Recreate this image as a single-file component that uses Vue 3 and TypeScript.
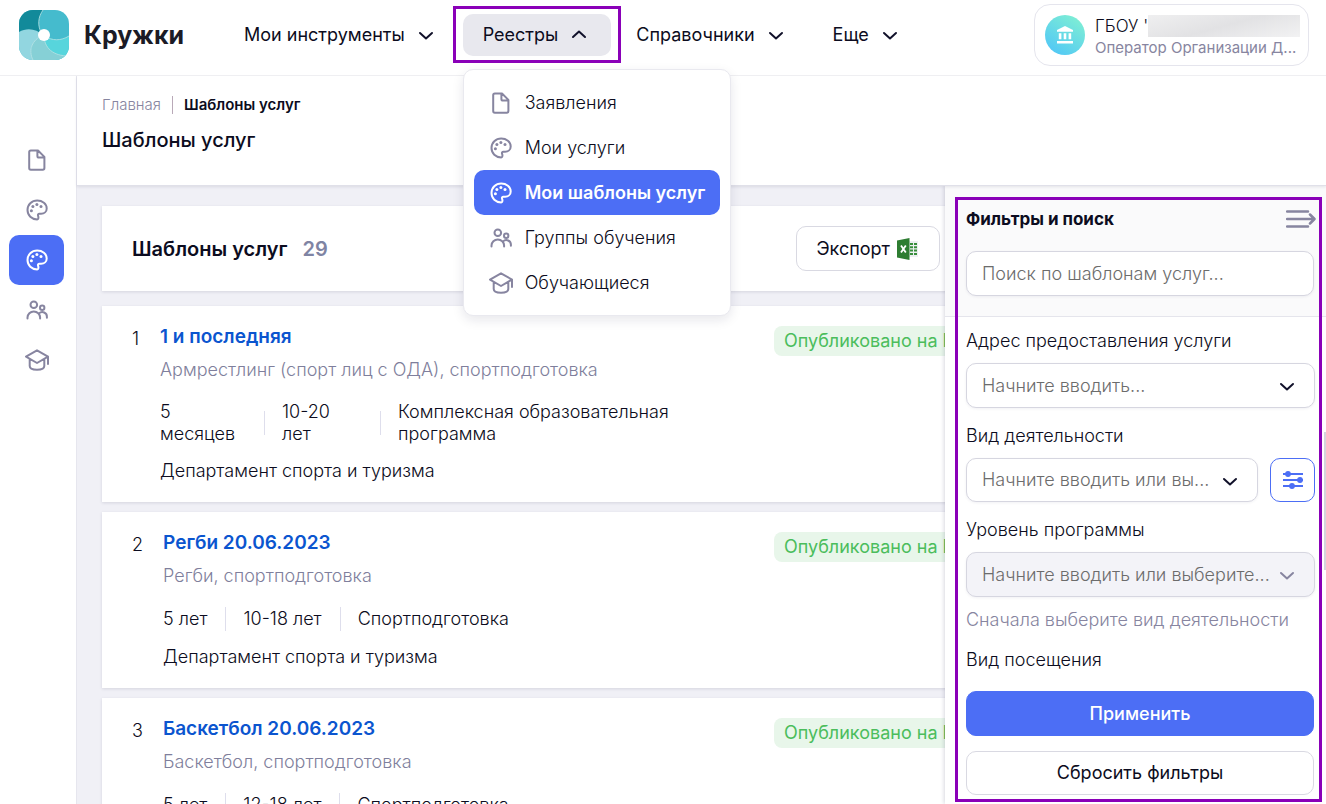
<script setup lang="ts">
import { ref } from 'vue'

type IconName = 'file' | 'palette' | 'group' | 'cap'

interface MenuItem {
  label: string
  icon: IconName
  active?: boolean
}

interface Service {
  id: number
  title: string
  activity: string
  facts: string[]
  department: string
  long?: boolean
}

const menu: MenuItem[] = [
  { label: 'Заявления', icon: 'file' },
  { label: 'Мои услуги', icon: 'palette' },
  { label: 'Мои шаблоны услуг', icon: 'palette', active: true },
  { label: 'Группы обучения', icon: 'group' },
  { label: 'Обучающиеся', icon: 'cap' },
]

const nav = ['Мои инструменты', 'Реестры', 'Справочники', 'Еще']
const opened = ref('Реестры')

const services: Service[] = [
  {
    id: 1,
    title: '1 и последняя',
    activity: 'Армрестлинг (спорт лиц с ОДА), спортподготовка',
    facts: ['5 месяцев', '10-20 лет', 'Комплексная образовательная программа'],
    department: 'Департамент спорта и туризма',
    long: true,
  },
  {
    id: 2,
    title: 'Регби 20.06.2023',
    activity: 'Регби, спортподготовка',
    facts: ['5 лет', '10-18 лет', 'Спортподготовка'],
    department: 'Департамент спорта и туризма',
  },
  {
    id: 3,
    title: 'Баскетбол 20.06.2023',
    activity: 'Баскетбол, спортподготовка',
    facts: ['5 лет', '12-18 лет', 'Спортподготовка'],
    department: 'Департамент спорта и туризма',
  },
]

function toggle(name: string) {
  opened.value = opened.value === name ? '' : name
}
</script>

<template>
  <div class="page">
    <svg class="sprite" aria-hidden="true">
      <symbol id="i-file" viewBox="0 0 24 24">
        <path d="M5.8 2.5h7.2l6.4 6.4v11.200a1.600 1.600 0 0 1-1.600 1.600H5.800a1.600 1.600 0 0 1-1.600-1.600V4.100a1.600 1.600 0 0 1 1.600-1.600z M12.400 2.800v5.100a1.600 1.600 0 0 0 1.600 1.600h5" />
      </symbol>
      <symbol id="i-palette" viewBox="0 0 24 24">
        <path d="M12.200 21.400C6.700 21.400 2.500 17.300 2.500 12S6.700 2.500 12.200 2.500c5.200 0 9.500 3.400 9.500 7.900 0 3.400-2.600 5.400-5.600 5.400h-1.700c-1.400 0-1.700 1-1.300 2.100.5 1.300.6 3.500-.9 3.500z" />
        <g class="dots">
          <circle cx="6.400" cy="12.700" r="1.500" />
          <circle cx="7.900" cy="8.500" r="1.500" />
          <circle cx="11.900" cy="6.500" r="1.500" />
          <circle cx="16" cy="8.400" r="1.500" />
        </g>
      </symbol>
      <symbol id="i-group" viewBox="0 0 24 24">
        <circle cx="8.800" cy="6.700" r="3.300" />
        <circle cx="17.200" cy="9.700" r="2.200" />
        <path d="M2.500 20.500v-.9a6.300 6.100 0 0 1 12.600 0v.9M14.100 15.400a4.600 4.600 0 0 1 7.800 3.500v.9" />
      </symbol>
      <symbol id="i-cap" viewBox="0 0 24 24">
        <path d="M12 2.300 1 8.600l11 6.400 11-6.400z M23 8.600v7.400 M4.700 11v7c0 2.600 3 3.700 7.300 3.700s7.300-1.100 7.300-3.700v-7" />
      </symbol>
    </svg>

    <header class="top">
      <a class="brand" href="#">
        <svg class="logo" viewBox="0 0 50 50" aria-hidden="true">
          <defs>
            <clipPath id="logo-clip"><rect width="50" height="50" rx="14" /></clipPath>
          </defs>
          <g clip-path="url(#logo-clip)">
            <rect width="50" height="50" fill="#45bbcd" />
            <path d="M24 0C19 7 18 16 23 24L0 24V0z" fill="#128a9a" />
            <path d="M50 26C42 31 33 31 26 26L26 50H50z" fill="#57d5dc" />
            <path d="M25 25C25 38 34 46 50 46V50H10L14 30z" fill="#86d0d6" />
            <path d="M0 22C8 17 18 19 24 25C13 30 9 40 14 50H0z" fill="#92d6e0" />
            <g fill="none" stroke="#b9e3e4" stroke-width="0.8">
              <path d="M24 0C19 7 18 16 23 24" />
              <path d="M50 26C42 31 33 31 26 26" />
              <path d="M25 25C25 38 34 46 50 46" />
              <path d="M24 25C13 30 9 40 14 50" />
            </g>
          </g>
          <circle cx="25" cy="25" r="6" fill="#fff" />
        </svg>
        <span>Кружки</span>
      </a>

      <nav class="nav">
        <div v-for="name in nav" :key="name" class="nav-cell">
          <button
            type="button"
            class="nav-btn"
            :class="{ open: opened === name }"
            :aria-expanded="opened === name"
            @click="toggle(name)"
          >
            <span>{{ name }}</span>
            <svg class="chev" viewBox="0 0 24 24" aria-hidden="true"><path d="M6 10l6 5.500L18 10" /></svg>
          </button>
          <div v-if="name === 'Реестры' && opened === name" class="menu">
            <a v-for="item in menu" :key="item.label" href="#" class="menu-item" :class="{ active: item.active }">
              <svg class="icon" aria-hidden="true"><use :href="'#i-' + item.icon" /></svg>
              <span>{{ item.label }}</span>
            </a>
          </div>
        </div>
      </nav>

      <button type="button" class="user">
        <span class="avatar">
          <svg viewBox="0 0 20 20" aria-hidden="true">
            <path d="M10 1 18 5v1.800H2V5z M3.800 8.200h2.600v6H3.800z M8.700 8.200h2.600v6H8.700z M13.600 8.200h2.600v6h-2.600z M2 16h16v2.400H2z" />
          </svg>
        </span>
        <span class="user-text">
          <span class="user-name">ГБОУ '<i class="mask"></i></span>
          <span class="user-role">Оператор Организации Д...</span>
        </span>
      </button>
    </header>

    <div class="body">
      <aside class="side">
        <a v-for="item in menu" :key="item.label" href="#" class="side-link" :class="{ active: item.active }" :aria-label="item.label">
          <svg class="icon" aria-hidden="true"><use :href="'#i-' + item.icon" /></svg>
        </a>
      </aside>

      <main class="main">
        <div class="page-head">
          <div class="crumbs">
            <a href="#">Главная</a>
            <span class="bar"></span>
            <b>Шаблоны услуг</b>
          </div>
          <h1>Шаблоны услуг</h1>
        </div>

        <div class="work">
          <section class="list">
            <div class="card list-head">
              <h2>Шаблоны услуг</h2>
              <span class="count">29</span>
              <button type="button" class="btn export">
                <span>Экспорт</span>
                <svg viewBox="0 0 22 22" aria-hidden="true">
                  <rect x="10" y="3" width="11" height="16" fill="#eceff1" />
                  <g fill="#388e3c">
                    <path d="M13 5h3v2h-3zM17 5h3v2h-3zM13 8.300h3v2h-3zM17 8.300h3v2h-3zM13 11.600h3v2h-3zM17 11.600h3v2h-3zM13 15h3v2h-3zM17 15h3v2h-3z" />
                  </g>
                  <path d="M12.500 22 0 19.500v-17L12.500 0z" fill="#2e7d32" />
                  <path d="M4 7.500 8.800 14.500M8.800 7.500 4 14.500" stroke="#fff" stroke-width="1.800" />
                </svg>
              </button>
            </div>

            <article v-for="s in services" :key="s.id" class="card service">
              <span class="num">{{ s.id }}</span>
              <div class="info">
                <a href="#" class="title">{{ s.title }}</a>
                <p class="activity">{{ s.activity }}</p>
                <ul class="facts" :class="{ long: s.long }">
                  <li v-for="fact in s.facts" :key="fact">{{ fact }}</li>
                </ul>
                <p class="dept">{{ s.department }}</p>
              </div>
              <div class="status"><span class="badge">Опубликовано на Mos.ru</span></div>
            </article>
          </section>

          <aside class="filters">
            <div class="filters-head">
              <div class="filters-title">
                <h3>Фильтры и поиск</h3>
                <button type="button" class="collapse" aria-label="Свернуть">
                  <svg viewBox="0 0 30 18" aria-hidden="true">
                    <path d="M1 1.500h21M1 9h27M1 16.500h21M24 4.500 28.500 9 24 13.500" />
                  </svg>
                </button>
              </div>
              <input class="field" type="text" placeholder="Поиск по шаблонам услуг..." aria-label="Поиск по шаблонам услуг" />
            </div>

            <div class="filters-body">
              <label for="address">Адрес предоставления услуги</label>
              <div class="select">
                <select id="address" class="field"><option>Начните вводить...</option></select>
                <svg class="chev" viewBox="0 0 24 24" aria-hidden="true"><path d="M6 10l6 5.500L18 10" /></svg>
              </div>

              <label for="activity">Вид деятельности</label>
              <div class="row">
                <div class="select">
                  <select id="activity" class="field"><option>Начните вводить или вы...</option></select>
                  <svg class="chev" viewBox="0 0 24 24" aria-hidden="true"><path d="M6 10l6 5.500L18 10" /></svg>
                </div>
                <button type="button" class="tune" aria-label="Настроить">
                  <svg viewBox="0 0 22 20" aria-hidden="true">
                    <path d="M1 4h20M1 10h20M1 16h20" />
                    <circle cx="6" cy="4" r="2.900" />
                    <circle cx="18" cy="10" r="2.900" />
                    <circle cx="10" cy="16" r="2.900" />
                  </svg>
                </button>
              </div>

              <label for="level">Уровень программы</label>
              <div class="select">
                <select id="level" class="field" disabled><option>Начните вводить или выберите...</option></select>
                <svg class="chev muted" viewBox="0 0 24 24" aria-hidden="true"><path d="M6 10l6 5.500L18 10" /></svg>
              </div>
              <p class="hint">Сначала выберите вид деятельности</p>

              <span class="label">Вид посещения</span>
            </div>

            <div class="filters-foot">
              <button type="button" class="btn primary">Применить</button>
              <button type="button" class="btn reset">Сбросить фильтры</button>
            </div>
            <span class="thumb"></span>
          </aside>
        </div>
      </main>
    </div>
  </div>
</template>

<style>
body {
  margin: 0;
  overflow: hidden;
}
</style>

<style scoped>
* {
  box-sizing: border-box;
}

.page {
  display: flex;
  flex-direction: column;
  height: 100vh;
  overflow: hidden;
  background: #fff;
  color: #0c0c20;
  font: 300 18px/22px Inter, 'Open Sans', sans-serif;
}

h1, h2, h3, p, ul {
  margin: 0;
  padding: 0;
}

a {
  color: inherit;
  text-decoration: none;
}

button, input, select {
  font: inherit;
  color: inherit;
}

button {
  cursor: pointer;
}

.sprite {
  position: absolute;
  width: 0;
  height: 0;
}

.icon {
  flex: none;
  width: 24px;
  height: 24px;
  fill: none;
  stroke: #8785a0;
  stroke-width: 2;
  stroke-linecap: round;
  stroke-linejoin: round;
  color: #8785a0;
}

.dots {
  fill: currentColor;
  stroke: none;
}

.active .icon {
  stroke: #fff;
  color: #fff;
}

.chev {
  flex: none;
  width: 24px;
  height: 24px;
  fill: none;
  stroke: #11112a;
  stroke-width: 2;
  stroke-linecap: round;
  stroke-linejoin: round;
}

.chev.muted {
  stroke: #8785a0;
}

/* header */
.top {
  position: relative;
  z-index: 3;
  flex: none;
  display: flex;
  align-items: center;
  height: 76px;
  padding: 0 17px 5px 19px;
  background: #fff;
  border-bottom: 1px solid #efeff2;
}

.brand {
  display: flex;
  align-items: center;
  gap: 15px;
  width: 205px;
  color: #1b1b26;
  font-size: 25px;
  line-height: 32px;
  font-weight: 700;
}

.logo {
  width: 50px;
  height: 50px;
}

.nav {
  display: flex;
  gap: 5px;
}

.nav-cell {
  position: relative;
}

.nav-btn {
  display: flex;
  align-items: center;
  gap: 9px;
  height: 42px;
  padding: 0 20px;
  border: 0;
  border-radius: 10px;
  background: none;
  font-weight: 400;
}

.nav-btn.open {
  background: #e8e8ee;
}

.nav-btn.open .chev {
  transform: rotate(180deg);
}

.nav-btn.open::after {
  content: '';
  position: absolute;
  inset: -8px -10px -7px;
  border: 3px solid #8a00b8;
  pointer-events: none;
}

.menu {
  position: absolute;
  top: 55px;
  left: 0;
  padding: 10px;
  border: 1px solid #e9e9ef;
  border-radius: 10px;
  background: #fff;
  box-shadow: 0 4px 12px rgba(20, 20, 60, 0.1);
}

.menu-item {
  display: flex;
  align-items: center;
  gap: 12px;
  height: 45px;
  padding: 0 15px;
  border-radius: 10px;
  white-space: nowrap;
}

.menu-item.active {
  background: #4c6ef5;
  color: #fff;
  font-weight: 600;
}

.user {
  display: flex;
  align-items: center;
  gap: 10px;
  width: 275px;
  height: 62px;
  margin-left: auto;
  padding: 0 8px 0 10px;
  border: 1px solid #e5e5ed;
  border-radius: 16px;
  background: #fff;
  text-align: left;
}

.avatar {
  flex: none;
  display: grid;
  place-items: center;
  width: 40px;
  height: 40px;
  border-radius: 50%;
  background: linear-gradient(35deg, #4cc3fa, #84f3d0);
}

.avatar svg {
  width: 20px;
  height: 20px;
  fill: #fff;
}

.user-text {
  flex: 1;
  display: flex;
  flex-direction: column;
  min-width: 0;
  padding-top: 4px;
  white-space: nowrap;
}

.user-name {
  display: flex;
  align-items: center;
  font-size: 17px;
}

.mask {
  flex: 1;
  height: 22px;
  background: linear-gradient(165deg, #efeff0, #e2e2e4 50%, #f2f2f3);
}

.user-role {
  color: #8785a0;
  font-size: 15px;
  font-weight: 400;
}

/* frame */
.body {
  flex: 1;
  display: flex;
  min-height: 0;
}

.side {
  flex: none;
  width: 77px;
  padding: 59px 12px 0 9px;
  border-right: 1px solid #e6e6ee;
  box-shadow: 1px 0 3px rgba(20, 20, 60, 0.08);
}

.side-link {
  display: flex;
  align-items: center;
  justify-content: center;
  height: 50px;
  border-radius: 10px;
}

.side-link.active {
  background: #4c6ef5;
}

.main {
  flex: 1;
  display: flex;
  flex-direction: column;
  min-width: 0;
}

.page-head {
  position: relative;
  z-index: 1;
  height: 110px;
  padding: 18px 25px;
  background: #fff;
  border-bottom: 1px solid #e0e0e9;
  box-shadow: 0 1px 3px rgba(20, 20, 60, 0.1);
}

.crumbs {
  display: flex;
  align-items: center;
  gap: 11px;
  font-size: 15px;
}

.crumbs a {
  color: #8785a0;
}

.crumbs b {
  font-weight: 600;
}

.bar {
  width: 1px;
  height: 18px;
  background: #b9a9b8;
}

h1 {
  margin-top: 12px;
  font-size: 20px;
  line-height: 24px;
  font-weight: 500;
}

.work {
  flex: 1;
  display: flex;
  min-height: 0;
  background: #f0f0f6;
}

/* list */
.list {
  flex: 1;
  min-width: 0;
  padding: 20px 0 0 25px;
  overflow: hidden;
}

.card {
  display: flex;
  margin: 0 -55px 10px 0;
  background: #fff;
  box-shadow: 0 1px 3px rgba(20, 20, 60, 0.12);
}

.list-head {
  align-items: center;
  gap: 15px;
  margin-bottom: 15px;
  padding: 20px 60px 20px 30px;
}

h2, .count {
  font-size: 20px;
  line-height: 24px;
  font-weight: 600;
}

.count {
  color: #7f84a3;
}

.btn {
  height: 45px;
  border: 1px solid #d9d9e2;
  border-radius: 10px;
  background: #fff;
  font-weight: 400;
}

.export {
  display: flex;
  align-items: center;
  gap: 7px;
  margin-left: auto;
  padding: 0 20px 0 19px;
}

.export svg {
  width: 22px;
  height: 22px;
}

.service {
  gap: 20px;
  padding: 20px 30px;
}

.num {
  min-width: 8px;
  margin-top: 2px;
}

.info {
  flex: 1;
  min-width: 0;
}

.title {
  display: block;
  color: #0b55cf;
  font-size: 19px;
  font-weight: 600;
}

.activity {
  margin-top: 11px;
  color: #7f7f9c;
}

.facts {
  display: flex;
  align-items: center;
  min-height: 24px;
  margin-top: 20px;
  list-style: none;
}

.facts li {
  position: relative;
  padding-right: 18px;
}

.facts li + li {
  padding-left: 18px;
}

.facts li + li::before {
  content: '';
  position: absolute;
  top: calc(50% - 12px);
  left: 0;
  width: 1px;
  height: 24px;
  background: #dedeec;
}

.facts.long {
  display: grid;
  grid-template-columns: 104px 116px 330px;
}

.facts.long li {
  padding-right: 24px;
}

.dept {
  margin-top: 15px;
}

.status {
  flex: none;
  width: 196px;
  white-space: nowrap;
}

.badge {
  display: inline-block;
  padding: 4px 10px;
  border-radius: 8px;
  background: #e8f6ea;
  color: #4bbd5c;
  font-weight: 400;
}

/* filters */
.filters {
  position: relative;
  z-index: 0;
  flex: none;
  display: flex;
  flex-direction: column;
  width: 381px;
  background: #fff;
  box-shadow: -1px 0 4px rgba(20, 20, 60, 0.16);
}

.filters::after {
  content: '';
  position: absolute;
  inset: 11px 4px 2px 10px;
  border: 3px solid #8a00b8;
  pointer-events: none;
}

.filters-head {
  padding: 22px 12px 20px 21px;
  border-bottom: 1px solid #e5e5ec;
  background: #fafafb;
}

.filters-title {
  display: flex;
  align-items: center;
  justify-content: space-between;
  margin: 0 -2px 21px 0;
}

h3 {
  font-size: 17px;
  line-height: 22px;
  font-weight: 700;
}

.collapse {
  display: block;
  height: 18px;
  padding: 0;
  border: 0;
  background: none;
}

.collapse svg {
  display: block;
  width: 30px;
  height: 18px;
  fill: none;
  stroke: #8785a0;
  stroke-width: 2.5;
  stroke-linecap: round;
  stroke-linejoin: round;
}

.field {
  display: block;
  width: 100%;
  height: 45px;
  padding: 0 15px;
  border: 1px solid #d6d6e0;
  border-radius: 10px;
  background: #fff;
  box-shadow: 0 1px 3px rgba(20, 20, 60, 0.06);
  color: #6c6c6c;
  opacity: 1;
}

.field::placeholder {
  color: #6c6c6c;
}

select.field {
  appearance: none;
}

select.field:disabled {
  background: #f3f3f8;
}

.filters-body {
  flex: 1;
  min-height: 0;
  padding: 13px 11px 0 21px;
  overflow: hidden;
}

.filters-body label,
.label {
  display: block;
  margin-bottom: 11px;
}

.select {
  position: relative;
  flex: 1;
  min-width: 0;
  margin-bottom: 17px;
}

.select .chev {
  position: absolute;
  top: 11px;
  right: 16px;
  pointer-events: none;
}

.row {
  display: flex;
  gap: 12px;
}

.row .field,
.tune {
  height: 44px;
}

.tune {
  display: grid;
  place-items: center;
  width: 45px;
  padding: 0;
  border: 1px solid #4c6ef5;
  border-radius: 10px;
  background: #fff;
}

.tune svg {
  width: 22px;
  height: 20px;
  fill: #4c6ef5;
  stroke: #4c6ef5;
  stroke-width: 2;
}

.tune circle {
  stroke: none;
}

.hint {
  margin: -5px 0 18px;
  color: #8785a0;
}

.filters-foot {
  display: flex;
  flex-direction: column;
  gap: 15px;
  padding: 0 12px 9px 21px;
}

.btn.primary {
  border-color: #4c6ef5;
  background: #4c6ef5;
  color: #fff;
  font-weight: 500;
}

.btn.reset {
  height: 44px;
}

.thumb {
  position: absolute;
  top: 246px;
  right: 0;
  width: 2px;
  height: 138px;
  background: #d5d5dc;
}
</style>
